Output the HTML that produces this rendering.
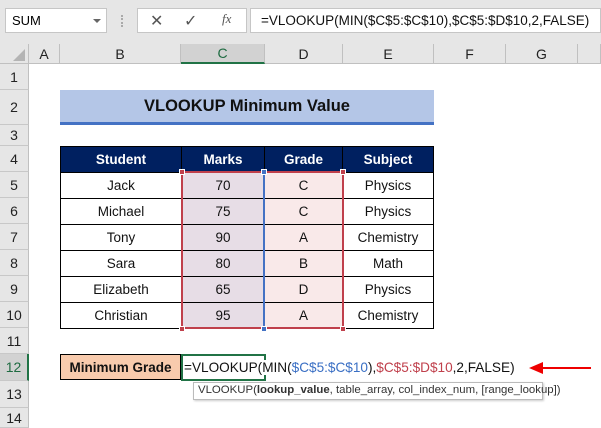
<!DOCTYPE html>
<html><head><style>
*{margin:0;padding:0;box-sizing:border-box}
body{width:601px;height:421px;overflow:hidden;background:#fff;font-family:"Liberation Sans",sans-serif;position:relative;font-size:13px}
.a{position:absolute}
.c{position:absolute;display:flex;align-items:center;justify-content:center}
.rh{position:absolute;left:0;width:29px;background:#e6e6e6;border-bottom:1px solid #c8c8c8;border-right:1px solid #c0c0c0;display:flex;align-items:center;justify-content:center;font-size:14px;color:#222}
.ch{position:absolute;top:44px;height:20px;background:#e6e6e6;border-right:1px solid #c0c0c0;border-bottom:1px solid #c0c0c0;display:flex;align-items:center;justify-content:center;font-size:14px;color:#222}
.t{position:absolute;border-right:1px solid #000;border-bottom:1px solid #000;display:flex;align-items:center;justify-content:center;font-size:13.5px;color:#111}
</style></head><body>
<div class="a" style="left:0;top:0;width:601px;height:44px;background:#e6e6e6"></div>
<div class="a" style="left:5px;top:8px;width:102px;height:25px;background:#fff;border:1px solid #c6c6c6"></div>
<div class="a" style="left:12px;top:13px;font-size:13px">SUM</div>
<div class="a" style="left:93px;top:19px;width:0;height:0;border-left:4px solid transparent;border-right:4px solid transparent;border-top:4px solid #666"></div>
<div class="a" style="left:121px;top:15px;width:2px;height:12px;border-left:2px dotted #aaa"></div>
<div class="a" style="left:137px;top:8px;width:110px;height:25px;background:#fff;border:1px solid #c6c6c6"></div>
<div class="a" style="left:150px;top:11px;font-size:16px;color:#555">✕</div>
<div class="a" style="left:184px;top:11px;font-size:16px;color:#555">✓</div>
<div class="a" style="left:222px;top:11px;font-size:13px;font-style:italic;font-family:'Liberation Serif',serif;color:#555">fx</div>
<div class="a" style="left:250px;top:8px;width:351px;height:25px;background:#fff;border:1px solid #c6c6c6"></div>
<div class="a" style="left:261px;top:13px;font-size:13.5px;color:#111">=VLOOKUP(MIN($C$5:$C$10),$C$5:$D$10,2,FALSE)</div>
<div class="a" style="left:0;top:44px;width:29px;height:20px;background:#e6e6e6;border-right:1px solid #c0c0c0;border-bottom:1px solid #c0c0c0"></div>
<div class="a" style="left:13px;top:49px;width:0;height:0;border-left:12px solid transparent;border-bottom:12px solid #b4b4b4"></div>
<div class="ch" style="left:29px;width:31px">A</div>
<div class="ch" style="left:60px;width:121px">B</div>
<div class="ch" style="left:181px;width:84px;background:#d2d2d2;border-bottom:2px solid #217346;color:#1e6b41">C</div>
<div class="ch" style="left:265px;width:78px">D</div>
<div class="ch" style="left:343px;width:91px">E</div>
<div class="ch" style="left:434px;width:72px">F</div>
<div class="ch" style="left:506px;width:72px">G</div>
<div class="ch" style="left:578px;width:23px"></div>
<div class="rh" style="top:64px;height:26px">1</div>
<div class="rh" style="top:90px;height:35px">2</div>
<div class="rh" style="top:125px;height:21px">3</div>
<div class="rh" style="top:146px;height:26px">4</div>
<div class="rh" style="top:172px;height:26px">5</div>
<div class="rh" style="top:198px;height:26px">6</div>
<div class="rh" style="top:224px;height:26px">7</div>
<div class="rh" style="top:250px;height:26px">8</div>
<div class="rh" style="top:276px;height:26px">9</div>
<div class="rh" style="top:302px;height:26px">10</div>
<div class="rh" style="top:328px;height:26px">11</div>
<div class="rh" style="top:354px;height:27px;background:#d2d2d2;border-right:2px solid #217346;color:#1e6b41">12</div>
<div class="rh" style="top:381px;height:27px">13</div>
<div class="rh" style="top:408px;height:20px">14</div>
<div class="c" style="left:60px;top:90px;width:374px;height:35px;background:#b4c6e7;border-bottom:3px solid #4472c4;font-weight:bold;font-size:16.5px;color:#111">VLOOKUP Minimum Value</div>
<div class="a" style="left:60px;top:146px;width:374px;height:183px;border-left:1px solid #000;border-top:1px solid #000"></div>
<div class="t" style="left:61px;top:147px;width:121px;height:26px;background:#002060;color:#fff;font-weight:bold">Student</div>
<div class="t" style="left:182px;top:147px;width:83px;height:26px;background:#002060;color:#fff;font-weight:bold">Marks</div>
<div class="t" style="left:265px;top:147px;width:78px;height:26px;background:#002060;color:#fff;font-weight:bold">Grade</div>
<div class="t" style="left:343px;top:147px;width:91px;height:26px;background:#002060;color:#fff;font-weight:bold">Subject</div>

<div class="t" style="left:61px;top:173px;width:121px;height:26px">Jack</div><div class="t" style="left:182px;top:173px;width:83px;height:26px;background:#e7dde6">70</div><div class="t" style="left:265px;top:173px;width:78px;height:26px;background:#f9e9e9">C</div><div class="t" style="left:343px;top:173px;width:91px;height:26px">Physics</div>
<div class="t" style="left:61px;top:199px;width:121px;height:26px">Michael</div><div class="t" style="left:182px;top:199px;width:83px;height:26px;background:#e7dde6">75</div><div class="t" style="left:265px;top:199px;width:78px;height:26px;background:#f9e9e9">C</div><div class="t" style="left:343px;top:199px;width:91px;height:26px">Physics</div>
<div class="t" style="left:61px;top:225px;width:121px;height:26px">Tony</div><div class="t" style="left:182px;top:225px;width:83px;height:26px;background:#e7dde6">90</div><div class="t" style="left:265px;top:225px;width:78px;height:26px;background:#f9e9e9">A</div><div class="t" style="left:343px;top:225px;width:91px;height:26px">Chemistry</div>
<div class="t" style="left:61px;top:251px;width:121px;height:26px">Sara</div><div class="t" style="left:182px;top:251px;width:83px;height:26px;background:#e7dde6">80</div><div class="t" style="left:265px;top:251px;width:78px;height:26px;background:#f9e9e9">B</div><div class="t" style="left:343px;top:251px;width:91px;height:26px">Math</div>
<div class="t" style="left:61px;top:277px;width:121px;height:26px">Elizabeth</div><div class="t" style="left:182px;top:277px;width:83px;height:26px;background:#e7dde6">65</div><div class="t" style="left:265px;top:277px;width:78px;height:26px;background:#f9e9e9">D</div><div class="t" style="left:343px;top:277px;width:91px;height:26px">Physics</div>
<div class="t" style="left:61px;top:303px;width:121px;height:26px">Christian</div><div class="t" style="left:182px;top:303px;width:83px;height:26px;background:#e7dde6">95</div><div class="t" style="left:265px;top:303px;width:78px;height:26px;background:#f9e9e9">A</div><div class="t" style="left:343px;top:303px;width:91px;height:26px">Chemistry</div>

<div class="a" style="left:181px;top:171px;width:163px;height:158px;border:2px solid #c0404c"></div>
<div class="a" style="left:263px;top:173px;width:2px;height:155px;background:#4472c4"></div>
<div class="a" style="left:179px;top:169px;width:6px;height:6px;background:#c0404c;border:1px solid #fff"></div>
<div class="a" style="left:261px;top:169px;width:6px;height:6px;background:#4472c4;border:1px solid #fff"></div>
<div class="a" style="left:340px;top:169px;width:6px;height:6px;background:#c0404c;border:1px solid #fff"></div>
<div class="a" style="left:340px;top:326px;width:6px;height:6px;background:#c0404c;border:1px solid #fff"></div>
<div class="a" style="left:261px;top:326px;width:6px;height:6px;background:#4472c4;border:1px solid #fff"></div>
<div class="a" style="left:179px;top:326px;width:6px;height:6px;background:#c0404c;border:1px solid #fff"></div>

<div class="c" style="left:60px;top:354px;width:121px;height:26px;background:#f8cbad;border:1px solid #000;font-weight:bold;font-size:13.5px;color:#111">Minimum Grade</div>
<div class="a" style="left:181px;top:354px;width:85px;height:27px;border:2px solid #217346"></div>
<div class="a" style="left:184px;top:360px;font-size:13.6px;color:#111;white-space:nowrap;background:#fff">=VLOOKUP(MIN(<span style="color:#3a6fc4">$C$5:$C$10</span>),<span style="color:#c0404c">$C$5:$D$10</span>,2,FALSE)</div>
<div class="a" style="left:193px;top:382px;width:350px;height:18px;background:#fff;border:1px solid #bbb;box-shadow:1px 1px 2px #ccc;font-size:11.4px;color:#333;padding:1px 4px;white-space:nowrap">VLOOKUP(<b>lookup_value</b>, table_array, col_index_num, [range_lookup])</div>
<svg class="a" style="left:527px;top:361px" width="70" height="14"><line x1="12" y1="7" x2="64" y2="7" stroke="#e00" stroke-width="2"/><polygon points="2,7 16,1 16,13" fill="#e00"/></svg>
</body></html>
